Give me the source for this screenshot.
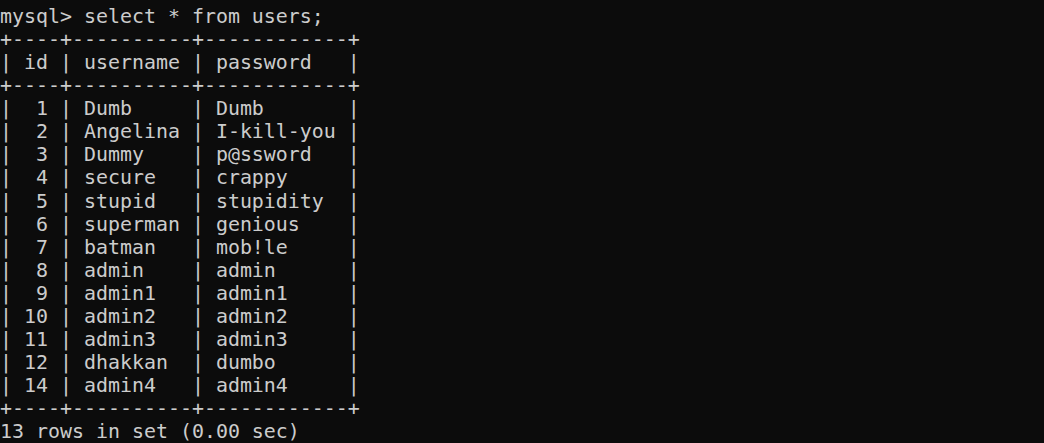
const rows: [string, string, string][] = [
  ['1', 'Dumb', 'Dumb'],
  ['2', 'Angelina', 'I-kill-you'],
  ['3', 'Dummy', 'p@ssword'],
  ['4', 'secure', 'crappy'],
  ['5', 'stupid', 'stupidity'],
  ['6', 'superman', 'genious'],
  ['7', 'batman', 'mob!le'],
  ['8', 'admin', 'admin'],
  ['9', 'admin1', 'admin1'],
  ['10', 'admin2', 'admin2'],
  ['11', 'admin3', 'admin3'],
  ['12', 'dhakkan', 'dumbo'],
  ['14', 'admin4', 'admin4'],
];

const border = '+----+----------+------------+';

function line(id: string, user: string, pass: string) {
  return `| ${id.padStart(2, ' ')} | ${user.padEnd(8, ' ')} | ${pass.padEnd(10, ' ')} |`;
}

export default function App() {
  const lines = [
    'mysql> select * from users;',
    border,
    '| id | username | password   |',
    border,
    ...rows.map(([a, b, c]) => line(a, b, c)),
    border,
    '13 rows in set (0.00 sec)',
  ];

  return (
    <div className="w-[1044px] h-[443px] overflow-hidden bg-[#0c0c0c] text-[#cccccc] pt-[5px]">
      <div className="font-['DejaVu_Sans_Mono',monospace] text-[19.93px] leading-[23.06px] whitespace-pre">
        {lines.map((l, i) => (
          <div key={i}>{l}</div>
        ))}
      </div>
    </div>
  );
}
